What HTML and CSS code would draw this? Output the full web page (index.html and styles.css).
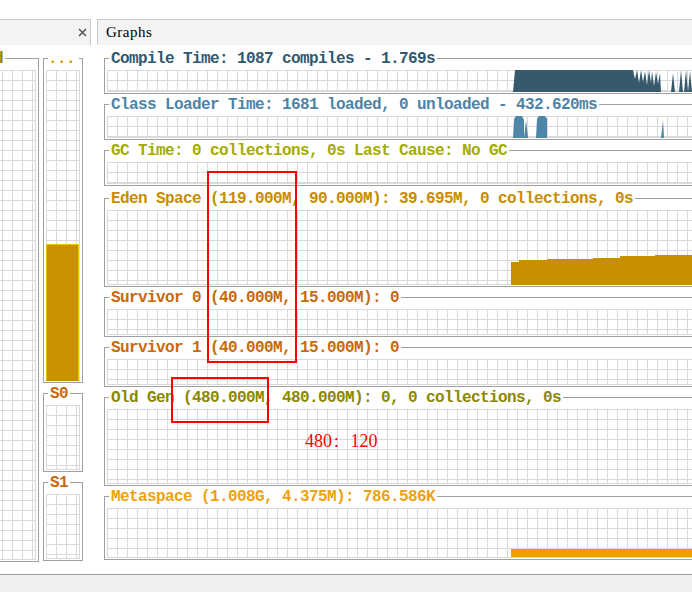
FILE: index.html
```html
<!DOCTYPE html>
<html>
<head>
<meta charset="utf-8">
<link rel="stylesheet" href="styles.css">
</head>
<body>
<div class="tabs">
  <div class="tab tab-left">
    <svg class="close" width="9" height="9" viewBox="0 0 9 9"><path d="M1 1L8 8M8 1L1 8" stroke="#555" stroke-width="1.5" fill="none"/></svg>
  </div>
  <div class="tab-gap"></div>
  <div class="tab tab-graphs">Graphs</div>
</div>
<div class="main">
  <div class="spaces">
    <section class="panel p-old">
      <div class="ph"><span class="t c-old">Old</span></div>
      <div class="pb"><div class="plot h490"></div></div>
    </section>
    <div class="minis">
      <section class="panel p-mini">
        <div class="ph"><span class="t t-dots c-dots">...</span></div>
        <div class="pb"><div class="plot h311 plot-fill"><div class="fill" style="height:137px"></div></div></div>
      </section>
      <section class="panel p-mini">
        <div class="ph"><span class="t c-surv">S0</span></div>
        <div class="pb"><div class="plot h65"></div></div>
      </section>
      <section class="panel p-mini">
        <div class="ph"><span class="t c-surv">S1</span></div>
        <div class="pb"><div class="plot h65"></div></div>
      </section>
    </div>
  </div>
  <div class="graphs">
    <section class="panel">
      <div class="ph"><span class="t c-compile">Compile Time: 1087 compiles - 1.769s </span></div>
      <div class="pb"><div class="plot h22">
        <svg class="data" width="614" height="22" viewBox="0 0 614 22"><path fill="#36596c" d="M406,22 L408,0 L526,0 L526,22 Z M526,22 L526,0 L528,9 L530,0 L532,13 L534,0 L536,12 L538,1 L540,15 L542,0 L544,13 L545,1 L547,16 L549,2 L551,14 L553,3 L554,22 Z M564,22 L566,3 L568,22 Z M572,22 L574,0 L576,22 Z M577,22 L579,0 L581,22 Z M581,22 L583,1 L585,22 Z"/></svg>
      </div></div>
    </section>
    <section class="panel">
      <div class="ph"><span class="t c-class">Class Loader Time: 1681 loaded, 0 unloaded - 432.620ms</span></div>
      <div class="pb"><div class="plot h22">
        <svg class="data" width="614" height="22" viewBox="0 0 614 22"><path fill="#4f86a8" d="M406,22 L407,3 L409,0 L415,0 L417,4 L417,22 Z M417,22 L419,4 L421,22 Z M429,22 L430,3 L432,0 L438,0 L440,3 L440,22 Z M554,22 L556,4 L557,22 Z"/></svg>
      </div></div>
    </section>
    <section class="panel">
      <div class="ph"><span class="t c-gc">GC Time: 0 collections, 0s Last Cause: No GC</span></div>
      <div class="pb"><div class="plot h22"></div></div>
    </section>
    <section class="panel p-eden">
      <div class="ph"><span class="t c-eden">Eden Space (119.000M, 90.000M): 39.695M, 0 collections, 0s</span></div>
      <div class="pb"><div class="plot h75">
        <svg class="data" width="614" height="75" viewBox="0 0 614 75"><path fill="#c89000" d="M404,75 V52 H412 V50 H440 V49 H486 V48 H513 V46 H548 V45 H614 V75 Z"/></svg>
      </div></div>
    </section>
    <section class="panel">
      <div class="ph"><span class="t c-surv">Survivor 0 (40.000M, 15.000M): 0</span></div>
      <div class="pb"><div class="plot h26"></div></div>
    </section>
    <section class="panel">
      <div class="ph"><span class="t c-surv">Survivor 1 (40.000M, 15.000M): 0</span></div>
      <div class="pb"><div class="plot h26"></div></div>
    </section>
    <section class="panel">
      <div class="ph"><span class="t c-oldgen">Old Gen (480.000M, 480.000M): 0, 0 collections, 0s</span></div>
      <div class="pb"><div class="plot h75">
        <span class="note">480<span class="colon">:</span> 120</span>
      </div></div>
    </section>
    <section class="panel">
      <div class="ph"><span class="t c-meta">Metaspace (1.008G, 4.375M): 786.586K</span></div>
      <div class="pb"><div class="plot h50">
        <svg class="data" width="614" height="50" viewBox="0 0 614 50"><rect fill="#ee9e0a" x="404" y="41" width="210" height="8"/></svg>
      </div></div>
    </section>
  </div>
</div>
<div class="footer"></div>
<div class="mark mark-1"></div>
<div class="mark mark-2"></div>
</body>
</html>
```
FILE: styles.css
```css
* { box-sizing: border-box; }
html, body { margin: 0; padding: 0; }
body {
  width: 692px;
  height: 592px;
  overflow: hidden;
  background: #fff;
  font-family: "Liberation Mono", monospace;
  position: relative;
}

/* tabs */
.tabs { display: flex; margin-top: 19px; height: 26px; }
.tab { background: #f3f3f3; border-top: 1px solid #c8c8c8; }
.tab-left {
  width: 91px;
  flex: none;
  border-right: 1px solid #c8c8c8;
  display: flex;
  align-items: center;
  justify-content: flex-end;
  padding-right: 3px;
}
.close { display: block; }
.tab-gap { width: 6px; flex: none; }
.tab-graphs {
  flex: 1;
  border-left: 1px solid #c8c8c8;
  padding-left: 8px;
  display: flex;
  align-items: center;
  font-family: "Liberation Serif", serif;
  font-size: 15px;
  letter-spacing: 0.5px;
  color: #000;
}

/* main area */
.main {
  height: 530px;
  border-bottom: 1px solid #9b9ba5;
  display: flex;
  align-items: flex-start;
  padding-top: 7px;
}
.footer { height: 17px; background: #f0f0f0; }

.spaces { display: flex; gap: 4px; margin-left: -31px; align-items: flex-start; flex: none; }
.p-old { width: 70px; flex: none; }
.minis { width: 40px; flex: none; display: flex; flex-direction: column; gap: 4px; }
.graphs { margin-left: 21px; width: 620px; flex: none; display: flex; flex-direction: column; gap: 4px; }
.p-eden { margin-top: 2px; }

/* titled panels */
.panel { display: flex; flex-direction: column; }
.ph {
  display: flex;
  height: 15px;
  line-height: 15px;
  font-weight: bold;
  font-size: 16px;
  letter-spacing: -0.6px;
  white-space: nowrap;
}
.ph::before {
  content: "";
  flex: none;
  width: 4px;
  height: 8px;
  align-self: flex-end;
  border-top: 1px solid #a0a0a0;
  border-left: 1px solid #a0a0a0;
}
.ph::after {
  content: "";
  flex: 1;
  min-width: 3px;
  height: 8px;
  align-self: flex-end;
  border-top: 1px solid #a0a0a0;
  border-right: 1px solid #a0a0a0;
}
.t { padding: 0 2px; flex: none; }
.t-dots { padding: 0 4px 0 0; }
.pb {
  border: 1px solid #a0a0a0;
  border-top: none;
  padding: 3px 2px 1px 2px;
}
.plot {
  position: relative;
  background-color: #fff;
  background-image:
    linear-gradient(to right, #d9d9d9 1px, transparent 1px),
    linear-gradient(to bottom, #d9d9d9 1px, transparent 1px);
  background-size: 10px 10px;
  border-right: 1px solid #d9d9d9;
  border-bottom: 1px solid #d9d9d9;
}
.h22 { height: 22px; }
.h26 { height: 26px; }
.h50 { height: 50px; }
.h65 { height: 65px; }
.h75 { height: 75px; }
.h311 { height: 311px; }
.h490 { height: 490px; }

.plot-fill { display: flex; flex-direction: column; justify-content: flex-end; border-bottom: none; }
.fill { background: #c99100; border: 1px solid #f2c400; border-bottom-color: #c99100; }

.data { position: absolute; left: 0; top: 0; display: block; overflow: visible; }

/* title colours */
.c-old { color: #8a8800; }
.c-dots { color: #d49c00; }
.c-surv { color: #c8690c; }
.c-compile { color: #30596f; }
.c-class { color: #4d83a5; }
.c-gc { color: #a3ab00; }
.c-eden { color: #c88c00; }
.c-oldgen { color: #8a8800; }
.c-meta { color: #f0a010; }

.note {
  position: absolute;
  left: 198px;
  top: 23px;
  font-family: "Liberation Serif", serif;
  font-size: 18px;
  line-height: 18px;
  color: #ff0000;
  word-spacing: 7px;
  white-space: nowrap;
}
.colon { margin: 0 0 0 2px; }

/* red annotation rectangles */
.mark { position: absolute; border: 2px solid #ff0000; }
.mark-1 { left: 207px; top: 171px; width: 90px; height: 192px; }
.mark-2 { left: 171px; top: 377px; width: 98px; height: 46px; }
```
